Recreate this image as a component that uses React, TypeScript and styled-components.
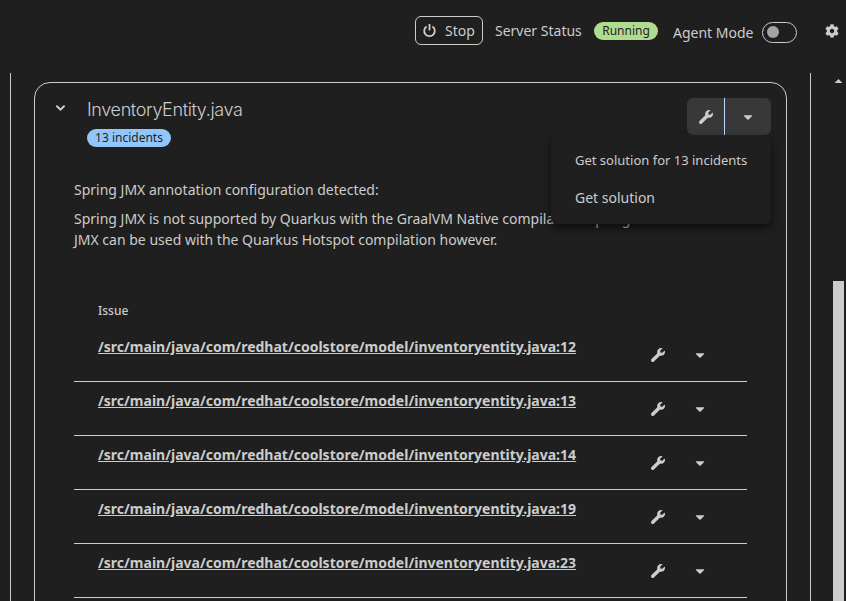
import React from "react";
import styled, { createGlobalStyle } from "styled-components";
import { FaCaretDown, FaCog } from "react-icons/fa";

const GlobalStyle = createGlobalStyle`
  *, *::before, *::after { box-sizing: border-box; }
  body {
    margin: 0;
    background: #1f1f1f;
    color: #cccccc;
    font-family: "Noto Sans", sans-serif;
    font-size: 14px;
    line-height: 21px;
    overflow: hidden;
  }
  button { font: inherit; color: inherit; background: none; border: 0; padding: 0; }
  p { margin: 0; }
`;

const Page = styled.div`
  display: flex;
  flex-direction: column;
  width: 846px;
  height: 601px;
  overflow: hidden;
`;

const Toolbar = styled.header`
  display: flex;
  flex: none;
  align-items: flex-start;
  height: 73px;
  padding: 16px 7px 0 415px;
`;

const StopButton = styled.button`
  display: flex;
  flex: none;
  align-items: center;
  gap: 8px;
  width: 68px;
  height: 29px;
  padding-left: 6px;
  border: 1px solid #cccccc;
  border-radius: 6px;
`;

const StatusLabel = styled.span`
  flex: none;
  width: 111px;
  padding: 4px 0 0 12px;
  white-space: nowrap;
`;

const Pill = styled.span<{ $tone: "green" | "blue" }>`
  display: flex;
  flex: none;
  align-items: center;
  justify-content: center;
  height: 18px;
  border-radius: 9px;
  font-size: 12px;
  line-height: 18px;
  color: #1f1f1f;
  background: ${(p) => (p.$tone === "green" ? "#afdc8f" : "#92c5f9")};
`;

const RunningPill = styled(Pill)`
  width: 64px;
  margin-top: 6px;
  padding-bottom: 1px;
`;

const IncidentPill = styled(Pill)`
  width: 84px;
  margin-top: 7px;
  padding-bottom: 1px;
`;

const AgentLabel = styled.span`
  flex: none;
  width: 104px;
  padding: 6px 0 0 15px;
  white-space: nowrap;
`;

const Switch = styled.span`
  display: flex;
  flex: none;
  width: 35px;
  height: 21px;
  margin-top: 6px;
  padding: 3px 4px;
  border: 1px solid #cccccc;
  border-radius: 11px;
`;

const Knob = styled.span`
  width: 12px;
  height: 12px;
  border-radius: 50%;
  background: #a3a3a3;
`;

const Settings = styled.button`
  display: flex;
  margin: 8px 0 0 auto;
`;

const Body = styled.div`
  display: flex;
  flex: 1;
  min-height: 0;
`;

const Panel = styled.main`
  width: 801px;
  margin-left: 10px;
  padding: 9px 23px 0;
  border: solid #cccccc;
  border-width: 0 1px;
`;

const Card = styled.section`
  height: 700px;
  border: 1px solid #cccccc;
  border-radius: 16px;
`;

const CardHeader = styled.div`
  display: flex;
  align-items: flex-start;
  height: 96px;
  padding: 15px 15px 0 20px;
`;

const Toggle = styled.button`
  display: flex;
  width: 32px;
  padding-top: 6px;
`;

const Heading = styled.div`
  flex: 1;
`;

const Title = styled.h2`
  margin: 0;
  font-family: Inter, sans-serif;
  font-size: 18px;
  font-weight: 300;
  line-height: 24px;
  letter-spacing: -0.37px;
`;

const Split = styled.div`
  position: relative;
  display: flex;
  width: 84px;
  height: 37px;
  border-radius: 6px;
  background: #383838;
`;

const SplitAction = styled.button`
  display: flex;
  align-items: center;
  justify-content: center;
  width: 38px;
  border-right: 1px solid #b9dafc;
`;

const SplitToggle = styled.button`
  display: flex;
  flex: 1;
  align-items: center;
  justify-content: center;
`;

const Menu = styled.div`
  position: absolute;
  top: 37px;
  right: 0;
  z-index: 1;
  display: flex;
  flex-direction: column;
  width: 220px;
  height: 89px;
  padding: 7px 0;
  border-radius: 6px;
  background: #1f1f1f;
  box-shadow: 0 4px 9px rgba(0, 0, 0, 0.6);
`;

const MenuItem = styled.button<{ $small?: boolean }>`
  height: 37px;
  padding-left: 24px;
  text-align: left;
  white-space: nowrap;
  font-size: ${(p) => (p.$small ? "13px" : "14px")};
`;

const Description = styled.div`
  display: flex;
  flex-direction: column;
  gap: 8px;
  height: 122px;
  padding: 0 39px;
`;

const Table = styled.div`
  width: 673px;
  margin-left: 39px;
`;

const TableHead = styled.div`
  height: 27px;
  padding-left: 24px;
  font-size: 12px;
  font-weight: 500;
  line-height: 20px;
`;

const Row = styled.div`
  display: flex;
  height: 54px;
  padding: 8px 40px 0 24px;
  border-bottom: 1px solid #cccccc;
`;

const FileLink = styled.a`
  flex: 1;
  font-weight: 700;
  text-decoration: underline;
`;

const RowActions = styled.div`
  display: flex;
  align-items: center;
  gap: 28px;
  height: 37px;
`;

const Scrollbar = styled.div`
  display: flex;
  flex-direction: column;
  width: 11px;
  margin-left: 22px;
`;

const ScrollUp = styled.svg`
  flex: none;
  width: 11px;
  height: 208px;
`;

const Thumb = styled.div`
  flex: 1;
  background: #cccccc;
`;

const PowerIcon = () => (
  <svg width="15" height="15" viewBox="0 0 15 15" fill="none" stroke="currentColor" strokeWidth="1.8">
    <path d="M4.6 3.4A5.3 5.3 0 1 0 10.4 3.4" />
    <path d="M7.5 1V7.4" />
  </svg>
);

const WrenchIcon = () => (
  <svg width="14" height="14" viewBox="0 0 512 512" fill="currentColor">
    <path d="M507.73 109.1c-2.24-9.03-13.54-12.09-20.12-5.51l-74.36 74.36-67.88-11.31-11.31-67.88 74.36-74.36c6.62-6.62 3.43-17.9-5.66-20.16-47.38-11.74-99.55.91-136.58 37.93-39.64 39.64-50.55 97.1-34.05 147.2L18.74 402.76c-24.99 24.99-24.99 65.51 0 90.5 24.99 24.99 65.51 24.99 90.5 0l213.21-213.21c50.12 16.71 107.47 5.68 147.37-34.22 37.07-37.07 49.7-89.32 37.91-136.73z" />
  </svg>
);

const lines = [12, 13, 14, 19, 23];

export default function App() {
  return (
    <Page>
      <GlobalStyle />
      <Toolbar>
        <StopButton>
          <PowerIcon />
          Stop
        </StopButton>
        <StatusLabel>Server Status</StatusLabel>
        <RunningPill $tone="green">Running</RunningPill>
        <AgentLabel>Agent Mode</AgentLabel>
        <Switch>
          <Knob />
        </Switch>
        <Settings aria-label="Settings">
          <FaCog size={14} />
        </Settings>
      </Toolbar>
      <Body>
        <Panel>
          <Card>
            <CardHeader>
              <Toggle aria-label="Collapse">
                <svg width="11" height="8" viewBox="0 0 11 8">
                  <path
                    d="M2 2.3 5.5 5.7 9 2.3"
                    fill="none"
                    stroke="currentColor"
                    strokeWidth="2"
                    strokeLinecap="round"
                  />
                </svg>
              </Toggle>
              <Heading>
                <Title>InventoryEntity.java</Title>
                <IncidentPill $tone="blue">13 incidents</IncidentPill>
              </Heading>
              <Split>
                <SplitAction aria-label="Resolve">
                  <WrenchIcon />
                </SplitAction>
                <SplitToggle aria-label="More solutions">
                  <FaCaretDown size={14} />
                </SplitToggle>
                <Menu>
                  <MenuItem $small>Get solution for 13 incidents</MenuItem>
                  <MenuItem>Get solution</MenuItem>
                </Menu>
              </Split>
            </CardHeader>
            <Description>
              <p>Spring JMX annotation configuration detected:</p>
              <p>
                Spring JMX is not supported by Quarkus with the GraalVM Native compilation. Spring
                <br />
                JMX can be used with the Quarkus Hotspot compilation however.
              </p>
            </Description>
            <Table>
              <TableHead>Issue</TableHead>
              {lines.map((line) => (
                <Row key={line}>
                  <FileLink>/src/main/java/com/redhat/coolstore/model/inventoryentity.java:{line}</FileLink>
                  <RowActions>
                    <WrenchIcon />
                    <FaCaretDown size={14} />
                  </RowActions>
                </Row>
              ))}
            </Table>
          </Card>
        </Panel>
        <Scrollbar>
          <ScrollUp viewBox="0 0 11 208">
            <path d="M1.5 10 5.5 6 9.5 10Z" fill="#cccccc" />
          </ScrollUp>
          <Thumb />
        </Scrollbar>
      </Body>
    </Page>
  );
}
